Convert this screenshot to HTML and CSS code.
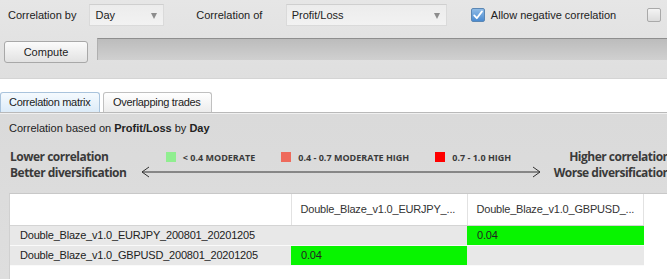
FILE: index.html
```html
<!DOCTYPE html>
<html lang="en">
<head>
    <meta charset="UTF-8">
    <title>Correlation</title>
    <link rel="stylesheet" href="styles.css">
</head>
<body>
    <!-- Toolbar -->
    <div class="toolbar">
        <div class="row">
            <span class="lbl lbl-by">Correlation by</span>
            <div class="select sel-day"><span>Day</span><span class="caret"></span></div>
            <span class="lbl lbl-of">Correlation of</span>
            <div class="select sel-of"><span>Profit/Loss</span><span class="caret"></span></div>
            <label class="check">
                <span class="box checked">
                    <svg width="12" height="12" viewBox="0 0 12 12"><path d="M2.2 6.4 L4.8 9.2 L10 2.4" fill="none" stroke="#fff" stroke-width="1.8" stroke-linecap="round" stroke-linejoin="round"/></svg>
                </span>
                Allow negative correlation
            </label>
            <span class="box box-off"></span>
        </div>
        <div class="row row2">
            <button class="btn">Compute</button>
            <div class="progress"></div>
        </div>
    </div>

    <!-- Tabs -->
    <div class="tabs">
        <div class="tab active">Correlation matrix</div>
        <div class="tab">Overlapping trades</div>
    </div>

    <!-- Panel -->
    <div class="panel">
        <div class="caption">Correlation based on <b>Profit/Loss</b> by <b>Day</b></div>

        <div class="legend">
            <div class="side">Lower correlation<br>Better diversification</div>
            <div class="scale">
                <div class="keys">
                    <span class="key"><span class="sw sw-low"></span>&lt; 0.4 MODERATE</span>
                    <span class="key"><span class="sw sw-mid"></span>0.4 - 0.7 MODERATE HIGH</span>
                    <span class="key"><span class="sw sw-high"></span>0.7 - 1.0 HIGH</span>
                </div>
                <svg class="arrow" width="400" height="12" viewBox="0 0 400 12">
                    <path d="M1 6 H399 M8 1 L1 6 L8 11 M392 1 L399 6 L392 11" fill="none" stroke="#333" stroke-width="1"/>
                </svg>
            </div>
            <div class="side side-right">Higher correlation<br>Worse diversification</div>
        </div>

        <div class="matrix">
            <table>
                <tr class="head">
                    <th class="c1"></th>
                    <th class="c2">Double_Blaze_v1.0_EURJPY_...</th>
                    <th class="c3">Double_Blaze_v1.0_GBPUSD_...</th>
                </tr>
                <tr>
                    <td>Double_Blaze_v1.0_EURJPY_200801_20201205</td>
                    <td></td>
                    <td class="hit">0.04</td>
                </tr>
                <tr>
                    <td>Double_Blaze_v1.0_GBPUSD_200801_20201205</td>
                    <td class="hit">0.04</td>
                    <td></td>
                </tr>
            </table>
        </div>
    </div>
</body>
</html>
```

FILE: styles.css
```css
/* General */
body {
    margin: 0;
    width: 667px;
    height: 279px;
    overflow: hidden;
    font-family: "Liberation Sans", Arial, sans-serif;
    font-size: 11px;
    color: #222;
    background: #dcdcdc;
}

/* Toolbar */
.toolbar {
    background: linear-gradient(#e6e6e6, #dfdfdf);
    padding: 4px 0 15px 0;
    border-bottom: 1px solid #d4d4d4;
}

.row {
    display: flex;
    align-items: center;
    height: 22px;
    white-space: nowrap;
}

.lbl-by {
    width: 83px;
    padding-left: 8px;
}

.lbl-of {
    width: 91px;
    margin-left: 32px;
}

.select {
    display: flex;
    align-items: center;
    justify-content: space-between;
    box-sizing: border-box;
    height: 22px;
    padding: 0 6px 0 5px;
    background: linear-gradient(#ececec, #f2f2f2);
    border: 1px solid #dadada;
    border-top-color: #cfcfcf;
}

.sel-day { width: 76px; }
.sel-of { width: 164px; }

.caret {
    width: 0;
    height: 0;
    border-left: 3.5px solid transparent;
    border-right: 3.5px solid transparent;
    border-top: 6px solid #8c8c8c;
    margin-top: 1px;
}

.check {
    display: flex;
    align-items: center;
    margin-left: 24px;
}

.box {
    display: inline-flex;
    align-items: center;
    justify-content: center;
    box-sizing: border-box;
    width: 14px;
    height: 14px;
    border-radius: 2px;
    border: 1px solid #a9a9a9;
    background: linear-gradient(#f4f4f4, #dcdcdc);
    margin-right: 6px;
}

.box.checked {
    border-color: #5b87b4;
    background: linear-gradient(#8fbbe6, #4a8ad0);
}

.box-off {
    margin-left: 31px;
}

.row2 {
    margin-top: 12px;
    height: 25px;
    align-items: flex-start;
}

.btn {
    margin: 3px 0 0 4px;
    width: 84px;
    height: 22px;
    font-family: "Liberation Sans", Arial, sans-serif;
    font-size: 11px;
    color: #222;
    border: 1px solid #a8a8a8;
    border-radius: 3px;
    background: linear-gradient(#fbfbfb, #e2e2e2);
    padding: 0;
}

.progress {
    flex: 1;
    margin-left: 9px;
    height: 22px;
    box-sizing: border-box;
    border-top: 1px solid #8e8e8e;
    border-left: 1px solid #b0b0b0;
    background: linear-gradient(#bcbcbc, #d0d0d0);
}

/* Tabs */
.tabs {
    display: flex;
    gap: 3px;
    background: #fff;
    padding-top: 13px;
    border-bottom: 1px solid #b9b9b9;
}

.tab {
    box-sizing: border-box;
    height: 20px;
    line-height: 19px;
    padding: 0 0 0 8px;
    white-space: nowrap;
    letter-spacing: -0.3px;
    border: 1px solid #c0c0c0;
    border-bottom: none;
    border-radius: 3px 3px 0 0;
    background: linear-gradient(#ffffff, #ececec);
    color: #222;
}

.tab.active {
    width: 100px;
    border-color: #a9c3dc;
    background: linear-gradient(#f5fafe, #dcebf8);
}

.tab + .tab {
    padding-left: 9px;
    width: 109px;
}

/* Panel */
.panel {
    box-sizing: border-box;
    height: 166px;
    overflow: hidden;
    border-top: 1px solid #f0f0f0;
    background: linear-gradient(#dadada, #dedede);
    padding-top: 6px;
}

.caption {
    padding-left: 9px;
    line-height: 16px;
    color: #222;
}

.legend {
    display: flex;
    align-items: flex-start;
    width: 660px;
    margin-top: 13px;
    padding-left: 10px;
    font-family: "Open Sans", "Noto Sans", sans-serif;
    color: #3a3a3a;
    white-space: nowrap;
}

.side {
    font-weight: bold;
    font-size: 12px;
    letter-spacing: -0.5px;
    line-height: 16px;
    width: 131px;
}

.side-right {
    text-align: right;
    flex: 1;
    width: auto;
}

.scale {
    width: 400px;
    margin-right: 12px;
}

.keys {
    display: flex;
    justify-content: center;
    gap: 26px;
    height: 16px;
    padding-right: 5px;
    align-items: center;
    font-size: 9px;
    font-weight: bold;
}

.key {
    display: flex;
    align-items: center;
}

.sw {
    width: 10px;
    height: 10px;
    margin-right: 7px;
}

.sw-low { background: #90ee90; }
.sw-mid { background: #ee6a5c; }
.sw-high { background: #ff0000; }

.arrow {
    display: block;
    margin-top: 1px;
}

/* Matrix */
.matrix {
    margin: 12px 0 0 9px;
    background: #fff;
    border-top: 1px solid #c8c8c8;
    border-left: 1px solid #d0d0d0;
    height: 90px;
}

table {
    border-collapse: collapse;
    letter-spacing: -0.2px;
}

th {
    height: 31px;
    box-sizing: border-box;
    text-align: left;
    font-weight: normal;
    color: #333;
    padding: 0 9px;
    border-right: 1px solid #e2e2e2;
    border-bottom: 1px solid #d4d4d4;
}

.c1 { width: 281px; }
.c2 { width: 176px; }
.c3 { width: 176px; }

td {
    height: 20px;
    box-sizing: border-box;
    padding: 0 10px;
    background: #e8e8e8;
    border-bottom: 1px solid #fafafa;
    color: #222;
}

td.hit {
    background: #08f400;
}
```
